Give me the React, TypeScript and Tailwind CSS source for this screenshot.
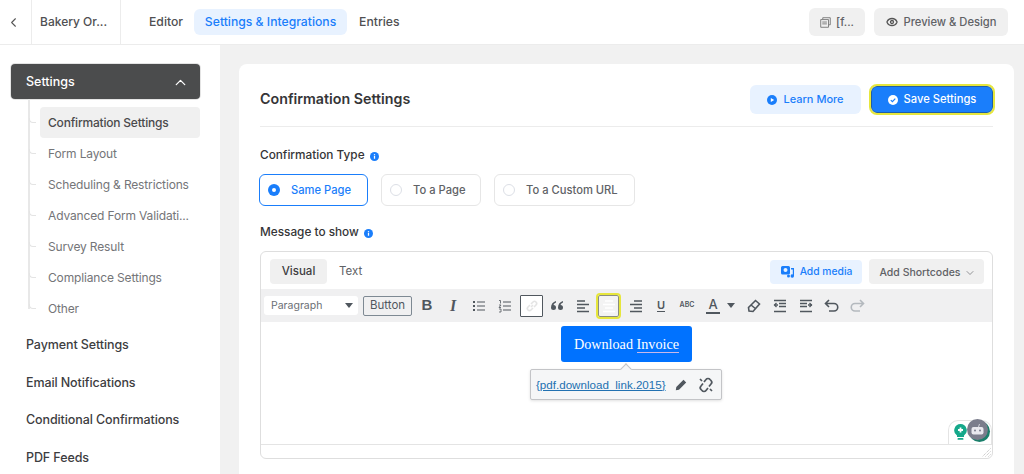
import { ChevronDown, ChevronLeft, ChevronUp, Eye } from 'lucide-react';
import type { ReactNode } from 'react';

const subItems = [
  'Confirmation Settings',
  'Form Layout',
  'Scheduling & Restrictions',
  'Advanced Form Validati...',
  'Survey Result',
  'Compliance Settings',
  'Other',
];

const mainItems = ['Payment Settings', 'Email Notifications', 'Conditional Confirmations', 'PDF Feeds'];

function InfoDot() {
  return (
    <svg width="9" height="9" viewBox="0 0 10 10" className="ml-[5px] shrink-0">
      <circle cx="5" cy="5" r="5" fill="#1a7efb" />
      <rect x="4.3" y="4.3" width="1.4" height="3.2" fill="#fff" />
      <rect x="4.3" y="2.4" width="1.4" height="1.2" fill="#fff" />
    </svg>
  );
}

function Glyph({ children, w = 26 }: { children: ReactNode; w?: number }) {
  return <span className="flex h-6 shrink-0 items-center justify-center" style={{ width: w }}>{children}</span>;
}

function Ico({ children, stroke = '#50575e', sw = 1.6 }: { children: ReactNode; stroke?: string; sw?: number }) {
  return (
    <svg width="14" height="14" viewBox="0 0 14 14" fill="none" stroke={stroke} strokeWidth={sw}>
      {children}
    </svg>
  );
}

function Toolbar() {
  return (
    <div className="flex h-[33px] items-center bg-[#f0f0f1] pl-[3px] text-[#50575e]">
      <div className="flex h-[19px] w-[94px] items-center justify-between rounded-[3px] bg-white pl-[7px] pr-[5px] text-[10.500px] text-[#6b6f75]">
        Paragraph
        <span className="h-0 w-0 border-x-[4px] border-t-[5px] border-x-transparent border-t-[#50575e]" />
      </div>
      <div className="ml-[5px] flex h-[20px] w-[49px] items-center justify-center rounded-[2px] border border-[#7e8993] text-[11.500px] text-[#50575e]">
        Button
      </div>
      <div className="ml-[2px] flex items-center">
        <Glyph><span className="font-['Liberation_Sans',sans-serif] text-[15px] font-bold">B</span></Glyph>
        <Glyph><span className="font-['Liberation_Serif',serif] text-[16px] font-bold italic">I</span></Glyph>
        <Glyph>
          <Ico sw={1.2}>
            <path d="M5 3h8M5 7h8M5 11h8" />
            <path d="M1 3h2M1 7h2M1 11h2" strokeWidth="2" />
          </Ico>
        </Glyph>
        <Glyph>
          <Ico sw={1.1}>
            <path d="M5 3h8M5 7h8M5 11h8" />
            <path d="M1 1.500h1.500v3M1 6h2L1 8.500h2M1 10h2v3H1" strokeWidth="0.8" />
          </Ico>
        </Glyph>
        <span className="ml-[2px] flex h-[22px] w-[23px] shrink-0 items-center justify-center rounded-[1px] border border-[#50575e] bg-white">
          <svg width="14" height="14" viewBox="0 0 14 14" fill="none" stroke="#e4e4e4" strokeWidth="1.6">
            <path d="M6 8l2-2M5 6L3 8a2 2 0 0 0 3 3l2-2M9 8l2-2a2 2 0 0 0-3-3L6 5" />
          </svg>
        </span>
        <Glyph w={28}>
          <svg width="14" height="12" viewBox="0 0 14 12" fill="#50575e">
            <path d="M6 1C3 2 1 4 1 7.500a2.500 2.500 0 1 0 2.500-2.500C3.800 3.800 4.800 3 6 2.500zM13 1c-3 1-5 3-5 6.500a2.500 2.500 0 1 0 2.500-2.500c.3-1.200 1.300-2 2.500-2.500z" />
          </svg>
        </Glyph>
        <Glyph w={24}>
          <Ico sw={1.4}><path d="M1 2h8M1 5.500h12M1 9h8M1 12.500h12" /></Ico>
        </Glyph>
        <span className="mx-[3px] flex h-[22px] w-[21px] shrink-0 items-center justify-center rounded-[2px] border border-[#8a8d80] bg-[#f3f3f3] outline-2 outline-[#e6e63c]">
          <svg width="14" height="14" viewBox="0 0 14 14" fill="none" stroke="#fff" strokeWidth="1.5">
            <path d="M3 2h8M1 5.500h12M3 9h8M1 12.500h12" />
          </svg>
        </span>
        <Glyph w={27}>
          <Ico sw={1.4}><path d="M5 2h8M1 5.500h12M5 9h8M1 12.500h12" /></Ico>
        </Glyph>
        <Glyph w={24}>
          <span className="border-b-[1.5px] border-[#50575e] text-[11px] font-semibold leading-[12px]">U</span>
        </Glyph>
        <Glyph w={28}><span className="text-[7px] font-semibold">ABC</span></Glyph>
        <Glyph w={24}>
          <span className="border-b-2 border-[#50575e] px-[2px] text-[13px] font-medium leading-[15px]">A</span>
        </Glyph>
        <span className="ml-[2px] h-0 w-0 border-x-[4px] border-t-[5px] border-x-transparent border-t-[#50575e]" />
        <Glyph w={37}>
          <svg width="14" height="14" viewBox="0 0 14 14" fill="none" stroke="#50575e" strokeWidth="1.6">
            <path d="M8.500 1.500l4 3.500-6.500 7.500-4-.5-.5-3.500zM4 6l5 4" />
          </svg>
        </Glyph>
        <Glyph w={15}>
          <Ico sw={1.3}>
            <path d="M1 1.500h12M6 4.500h7M6 7.500h7M1 12.500h12M5 6L1.500 6" />
            <path d="M3.500 4L1.500 6l2 2" fill="none" />
          </Ico>
        </Glyph>
        <Glyph w={37}>
          <Ico sw={1.3}>
            <path d="M1 1.500h12M1 4.500h7M1 7.500h7M1 12.500h12M9 6h4" />
            <path d="M10.500 4l2 2-2 2" fill="none" />
          </Ico>
        </Glyph>
        <Glyph w={16}>
          <svg width="16" height="14" viewBox="0 0 16 14" fill="none" stroke="#50575e" strokeWidth="1.6">
            <path d="M5 1L1.500 4.500 5 8M2 4.500h8a3.700 3.700 0 0 1 0 7.500H5" />
          </svg>
        </Glyph>
        <Glyph w={34}>
          <svg width="16" height="14" viewBox="0 0 16 14" fill="none" stroke="#b4b9be" strokeWidth="1.6">
            <path d="M11 1l3.500 3.500L11 8M14 4.500H6a3.700 3.700 0 0 0 0 7.500h5" />
          </svg>
        </Glyph>
      </div>
    </div>
  );
}

export default function App() {
  return (
    <div className="h-[474px] w-[1024px] overflow-hidden bg-[#f1f1f1] font-['Inter',sans-serif] text-[#353537]">
      <header className="flex h-[45px] items-stretch border-b border-[#ececec] bg-white">
        <div className="flex w-[32px] items-center border-r border-[#ececec] pl-[6px] text-[#555]">
          <ChevronLeft size={15} strokeWidth={1.7} />
        </div>
        <div className="flex w-[89px] items-center border-r border-[#ececec] pl-[8px] text-[12px] font-medium text-[#505052]">
          Bakery Or...
        </div>
        <nav className="flex items-center pl-[16px] text-[12.200px] font-medium">
          <span className="pl-[12px] pr-[11px] text-[#505052]">Editor</span>
          <span className="flex h-[26px] w-[153px] items-center justify-center rounded-[6px] bg-[#e8f2ff] text-[#1a7efb]">
            Settings &amp; Integrations
          </span>
          <span className="pl-[12px] text-[#505052]">Entries</span>
        </nav>
        <div className="ml-auto flex items-center gap-[9px] pr-[16px] text-[11.200px] font-medium text-[#606266]">
          <div className="flex h-[28px] w-[56px] items-center justify-center gap-[5px] rounded-[6px] bg-[#f0f0f0]">
            <svg width="11" height="11" viewBox="0 0 12 12" fill="none" stroke="#777" strokeWidth="1">
              <path d="M3 2.500V.800h8.200V8.500H9.500M.8 2.800h8.500v8.400H.8zM2.500 5.500h5M2.500 7.500h5" />
            </svg>
            [f...
          </div>
          <div className="flex h-[28px] w-[134px] items-center justify-center gap-[6px] rounded-[6px] bg-[#f0f0f0]">
            <Eye size={12} strokeWidth={2.6} className="text-[#555]" />
            Preview &amp; Design
          </div>
        </div>
      </header>

      <div className="flex h-[429px]">
        <aside className="w-[220px] shrink-0 bg-white pl-[11px] pr-[20px] pt-[19px]">
          <div className="flex h-[35px] items-center justify-between rounded-[4px] bg-[#4b4c4d] pl-[15px] pr-[11px] pt-px text-[12.500px] font-medium text-white shadow-[0_0_0_1px_#e4e4e4]">
            Settings
            <ChevronUp size={17} strokeWidth={1.8} />
          </div>
          <ul className="relative ml-[17px] mt-[8px]">
            <span className="absolute bottom-[15px] left-0 top-[-8px] w-[2px] bg-[#e8e8e8]" />
            {subItems.map((item, i) => (
              <li
                key={item}
                className={
                  i === 0
                    ? 'relative ml-[12px] flex h-[31px] items-center rounded-[4px] bg-[#f0f0f0] pl-[8px] text-[12px] font-medium tracking-[-0.2px] text-[#4a4a4c]'
                    : 'relative ml-[12px] flex h-[31px] items-center pl-[8px] text-[12px] tracking-[-0.15px] text-[#747578]'
                }
              >
                <span className="absolute left-[-11px] top-[11px] h-[5px] w-[7px] rounded-bl-[4px] border-b border-l border-[#e4e4e4]" />
                {item}
              </li>
            ))}
          </ul>
          <ul className="mt-[3px] pl-[15px] text-[12.500px] font-medium tracking-[-0.1px] text-[#3d3d3f]">
            {mainItems.map((item) => (
              <li key={item} className="flex h-[37.500px] items-center">{item}</li>
            ))}
          </ul>
        </aside>

        <main className="flex-1 pl-[19px] pr-[11px] pt-[19px]">
          <section className="h-[420px] rounded-t-[8px] bg-white px-[21px] pt-[20px]">
            <div className="flex h-[43px] items-start justify-between border-b border-[#ececec]">
              <h1 className="pt-[5px] text-[14.250px] font-semibold leading-[20px] text-[#353537]">Confirmation Settings</h1>
              <div className="mt-[1px] flex items-center gap-[10px]">
                <button className="flex h-[29px] w-[111px] items-center justify-center gap-[6px] rounded-[6px] bg-[#e8f2ff] text-[11px] font-medium text-[#1a7efb]">
                  <svg width="10" height="10" viewBox="0 0 10 10">
                    <circle cx="5" cy="5" r="5" fill="#1a7efb" />
                    <path d="M3.800 2.900v4.200L7.200 5z" fill="#fff" />
                  </svg>
                  Learn More
                </button>
                <button className="flex h-[27px] w-[122px] items-center justify-center gap-[6px] rounded-[6px] border border-[#1f5fa8] bg-[#1a7efb] text-[11.200px] font-medium text-white outline-2 outline-[#e6e63c]">
                  <svg width="10" height="10" viewBox="0 0 10 10">
                    <circle cx="5" cy="5" r="5" fill="#fff" />
                    <path d="M2.800 5.100l1.600 1.600 2.900-3" fill="none" stroke="#1a7efb" strokeWidth="1.200" />
                  </svg>
                  Save Settings
                </button>
              </div>
            </div>

            <div className="mt-[19px] flex h-[18px] items-center pt-[2px] text-[11.800px] font-medium">
              Confirmation Type
              <InfoDot />
            </div>
            <div className="-ml-px mt-[10px] flex gap-[13px] text-[11.200px] font-medium">
              <div className="flex h-[32px] w-[109px] items-center gap-[11px] rounded-[6px] border border-[#1a7efb] pl-[8px] text-[#1a7efb]">
                <span className="flex h-[12px] w-[12px] items-center justify-center rounded-full bg-[#1a7efb]">
                  <span className="h-[4px] w-[4px] rounded-full bg-white" />
                </span>
                <span className="pt-px">Same Page</span>
              </div>
              <div className="flex h-[32px] w-[100px] items-center gap-[11px] rounded-[6px] border border-[#e6e6e6] pl-[8px] text-[#606266]">
                <span className="h-[12px] w-[12px] rounded-full border border-[#dcdfe6]" />
                <span className="pt-px">To a Page</span>
              </div>
              <div className="flex h-[32px] w-[141px] items-center gap-[11px] rounded-[6px] border border-[#e6e6e6] pl-[8px] text-[#606266]">
                <span className="h-[12px] w-[12px] rounded-full border border-[#dcdfe6]" />
                <span className="pt-px">To a Custom URL</span>
              </div>
            </div>
            <div className="mt-[17px] flex h-[18px] items-center pt-[2px] text-[11.800px] font-medium">
              Message to show
              <InfoDot />
            </div>

            <div className="mt-[10px] flex h-[208px] w-[733px] flex-col rounded-[6px] border border-[#dedede] bg-white">
              <div className="flex h-[37px] items-start justify-between pl-[9px] pr-[8px] pt-[7px]">
                <div className="flex items-center text-[11.500px]">
                  <span className="flex h-[25px] w-[57px] items-center justify-center rounded-[4px] bg-[#f0f0f0] pt-px font-medium text-[#3d3d3f]">Visual</span>
                  <span className="ml-[12px] pt-px text-[#606266]">Text</span>
                </div>
                <div className="flex items-center gap-[7px] font-medium">
                  <span className="flex h-[24px] w-[92px] items-center justify-center gap-[5px] rounded-[4px] bg-[#e8f2ff] text-[10.300px] text-[#1a7efb]">
                    <svg width="15" height="14" viewBox="0 0 14 14" fill="#1a7efb">
                      <path d="M2 1h6a1.500 1.500 0 0 1 1.500 1.500V8A1.500 1.500 0 0 1 8 9.500H2A1.500 1.500 0 0 1 .5 8V2.500A1.500 1.500 0 0 1 2 1zm3 2a2 2 0 1 0 0 4 2 2 0 0 0 0-4z" />
                      <path d="M10.500 3H13.500V11a1.700 1.700 0 1 1-1.200-1.600V4.500h-1.800zM6.500 11a1.500 1.500 0 1 0 3 0 1.500 1.500 0 0 0-3 0z" />
                    </svg>
                    <span className="pt-px">Add media</span>
                  </span>
                  <span className="flex h-[25px] w-[115px] items-center justify-center gap-[3px] rounded-[4px] bg-[#f0f0f0] pl-[2px] pt-[2px] text-[10.500px] text-[#606266]">
                    Add Shortcodes
                    <ChevronDown size={12} strokeWidth={1.3} />
                  </span>
                </div>
              </div>

              <Toolbar />

              <div className="relative flex h-[123px] justify-center border-b border-[#e4e4e4] pt-[4px]">
                <div className="flex h-[36px] w-[131px] items-center justify-center rounded-[3px] bg-[#0072ff] pt-px font-['Liberation_Serif',serif] text-[14.200px] text-white">
                  Download&nbsp;<span className="border-b border-[#c9b8e8] leading-[15px]">Invoice</span>
                </div>
                <div className="absolute left-[269px] top-[47px] flex h-[31px] w-[192px] items-center rounded-[2px] border border-[#c3c4c7] bg-[#f5f6f7] pl-[5px] text-[11.600px] text-[#2271b1] shadow-[0_1px_3px_rgba(0,0,0,0.12)]">
                  <span className="absolute left-[91px] top-[-5px] h-[8px] w-[8px] rotate-45 border-l border-t border-[#c3c4c7] bg-[#f5f6f7]" />
                  <span className="font-['Liberation_Sans',sans-serif] underline">{'{pdf.download_link.2015}'}</span>
                  <svg width="12" height="12" viewBox="0 0 12 12" fill="#50575e" className="ml-[9px]">
                    <path d="M8.500.8l2.700 2.700L4 10.700.8 11.200l.5-3.200zM2.200 8.400l1.400 1.400" />
                  </svg>
                  <svg width="16" height="16" viewBox="0 0 16 16" fill="none" stroke="#50575e" strokeWidth="1.700" className="ml-[11px]">
                    <path d="M6 5l2-2.500a2.500 2.500 0 0 1 4 0l1 1a2.500 2.500 0 0 1 0 3.500L11 9.500M10 11l-2 2.500a2.500 2.500 0 0 1-4 0l-1-1a2.500 2.500 0 0 1 0-3.500L5 6.500M2 2l2 2M12 12l2 2" />
                  </svg>
                </div>
                <div className="absolute bottom-[0px] right-[0px] flex h-[24px] w-[44px] items-center rounded-t-[10px] border border-b-0 border-[#e4e4e4] bg-white pl-[5px]">
                  <svg width="13" height="17" viewBox="0 0 13 17">
                    <path d="M6.500 0a6.300 6.300 0 0 1 3.500 11.500V13H3v-1.500A6.300 6.300 0 0 1 6.500 0z" fill="#15a88a" />
                    <rect x="3.500" y="14" width="6" height="1.800" rx="0.900" fill="#15a88a" />
                    <path d="M6.500 3.500v5M4 6h5" stroke="#fff" strokeWidth="1.800" />
                  </svg>
                  <span className="absolute right-[3px] top-[-2px] flex h-[21px] w-[21px] items-center justify-center rounded-full bg-[#7b7d8c] shadow-[2px_2px_0_#1b7f6b]">
                    <svg width="13" height="11" viewBox="0 0 13 11">
                      <path d="M8.500 0L7.500 3" stroke="#e8e8ee" strokeWidth="0.800" />
                      <rect x="0.500" y="3" width="12" height="7.500" rx="2" fill="#e8e8ee" />
                      <circle cx="4" cy="6.500" r="1" fill="#7b7d8c" />
                      <circle cx="9" cy="6.500" r="1" fill="#7b7d8c" />
                    </svg>
                  </span>
                </div>
              </div>

              <div className="flex flex-1 items-end justify-end pb-[1px] pr-[1px]">
                <svg width="9" height="9" viewBox="0 0 9 9" stroke="#a8a8a8" strokeWidth="0.800" strokeDasharray="1 1">
                  <path d="M8.500 0.500L0.500 8.500M8.500 3.500L3.500 8.500M8.500 6.500L6.500 8.500" />
                </svg>
              </div>
            </div>
          </section>
        </main>
      </div>
    </div>
  );
}
